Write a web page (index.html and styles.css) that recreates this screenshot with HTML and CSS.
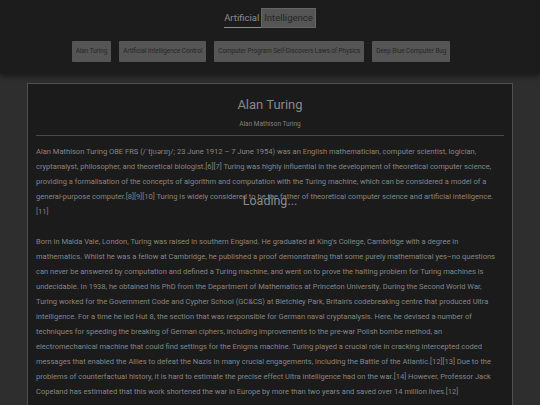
FILE: index.html
```html
<!DOCTYPE html>
<html>
<head>
<meta charset="utf-8">
<link rel="stylesheet" href="styles.css">
</head>
<body>
<header class="top">
  <div class="brand"><span class="brand-a">Artificial</span><span class="brand-b">Intelligence</span></div>
  <nav class="tabs">
    <span class="tab">Alan Turing</span>
    <span class="tab">Artificial Intelligence Control</span>
    <span class="tab">Computer Program Self-Discovers Laws of Physics</span>
    <span class="tab">Deep Blue Computer Bug</span>
  </nav>
</header>
<main class="page">
  <article class="card">
    <h1 class="title">Alan Turing</h1>
    <div class="subtitle">Alan Mathison Turing</div>
    <hr class="rule">
    <p class="para">Alan Mathison Turing OBE FRS (/ˈtjʊərɪŋ/; 23 June 1912 – 7 June 1954) was an English mathematician, computer scientist, logician, cryptanalyst, philosopher, and theoretical biologist.[6][7] Turing was highly influential in the development of theoretical computer science, providing a formalisation of the concepts of algorithm and computation with the Turing machine, which can be considered a model of a general-purpose computer.[8][9][10] Turing is widely considered to be the father of theoretical computer science and artificial intelligence.[11]</p>
    <p class="para">Born in Maida Vale, London, Turing was raised in southern England. He graduated at King's College, Cambridge with a degree in mathematics. Whilst he was a fellow at Cambridge, he published a proof demonstrating that some purely mathematical yes–no questions can never be answered by computation and defined a Turing machine, and went on to prove the halting problem for Turing machines is undecidable. In 1938, he obtained his PhD from the Department of Mathematics at Princeton University. During the Second World War, Turing worked for the Government Code and Cypher School (GC&amp;CS) at Bletchley Park, Britain's codebreaking centre that produced Ultra intelligence. For a time he led Hut 8, the section that was responsible for German naval cryptanalysis. Here, he devised a number of techniques for speeding the breaking of German ciphers, including improvements to the pre-war Polish bombe method, an electromechanical machine that could find settings for the Enigma machine. Turing played a crucial role in cracking intercepted coded messages that enabled the Allies to defeat the Nazis in many crucial engagements, including the Battle of the Atlantic.[12][13] Due to the problems of counterfactual history, it is hard to estimate the precise effect Ultra intelligence had on the war.[14] However, Professor Jack Copeland has estimated that this work shortened the war in Europe by more than two years and saved over 14 million lives.[12]</p>
  </article>
</main>
<div class="loading">Loading...</div>
</body>
</html>
```
FILE: styles.css
```css
html, body {
  margin: 0;
  padding: 0;
  background: #2e2e2e;
  font-family: Roboto, "Liberation Sans", sans-serif;
  color: #8a8a8a;
}
.top {
  background: #1c1c1c;
  height: 74px;
  box-shadow: 0 2px 6px rgba(0,0,0,0.5);
  display: flex;
  flex-direction: column;
  align-items: center;
  padding-top: 8px;
  box-sizing: border-box;
}
.brand {
  display: flex;
  font-size: 9.5px;
  height: 20px;
  line-height: 20px;
}
.brand-a {
  color: #8c8c8c;
  border-bottom: 1px solid #8c8c8c;
  padding-right: 2px;
  height: 19px;
}
.brand-b {
  background: #555;
  color: #262626;
  padding: 0 2px;
  border: 1px solid #666;
  height: 18px;
  line-height: 18px;
}
.tabs {
  display: flex;
  gap: 8px;
  margin-top: 13px;
  padding-right: 18px;
}
.tab {
  background: #555;
  color: #262626;
  font-size: 6.3px;
  height: 21px;
  line-height: 21px;
  padding: 0 4px;
  border-radius: 1px;
}
.page {
  padding: 9px 27px 0;
}
.card {
  background: #1b1b1b;
  border: 1px solid #505050;
  padding: 0 8px;
  height: 340px;
  overflow: hidden;
}
.title {
  margin: 12px 0 0;
  text-align: center;
  font-weight: normal;
  font-size: 13px;
  line-height: 18px;
  color: #888;
}
.subtitle {
  text-align: center;
  font-size: 6.5px;
  margin-top: 6px;
  color: #808080;
}
.rule {
  border: 0;
  border-top: 1px solid #4a4a4a;
  margin: 7px 0 0;
}
.para {
  font-size: 7.54px;
  line-height: 15px;
  margin: 8px 0 15px;
  color: #858585;
}
.loading {
  position: absolute;
  left: 0;
  right: 0;
  top: 193px;
  text-align: center;
  font-size: 12.5px;
  color: #8a8a8a;
}
```
